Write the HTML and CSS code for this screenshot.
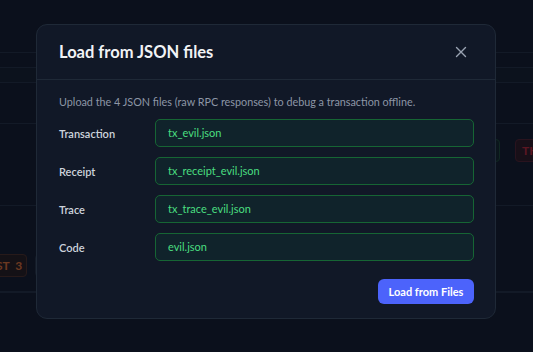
FILE: index.html
```html
<!DOCTYPE html>
<html>
<head>
<meta charset="utf-8">
<title>Load from JSON files</title>
<link rel="stylesheet" href="styles.css">
</head>
<body>

<div class="page">
  <div class="row row-top"></div>
  <div class="row row-thin"></div>
  <div class="row row-thin band"></div>
  <div class="row row-mid"></div>
  <div class="row row-tall">
    <span class="chip chip-green"></span>
    <span class="chip chip-red">TH</span>
  </div>
  <div class="row row-tall row-bottom">
    <span class="chip chip-orange">ST&nbsp;&nbsp;3</span>
    <span class="chip chip-ghost"></span>
  </div>
  <div class="row"></div>
</div>

<div class="overlay">
  <div class="modal">
    <div class="modal-head">
      <h2>Load from JSON files</h2>
      <button class="close" aria-label="Close">
        <svg width="12" height="12" viewBox="0 0 12 12"><path d="M1.5 1.5l9 9M10.5 1.5l-9 9" stroke="#9aa3b2" stroke-width="1.4" stroke-linecap="round"/></svg>
      </button>
    </div>
    <div class="modal-body">
      <p class="intro">Upload the 4 JSON files (raw RPC responses) to debug a transaction offline.</p>
      <div class="fields">
        <label class="label">Transaction</label>
        <div class="file">tx_evil.json</div>
        <label class="label">Receipt</label>
        <div class="file">tx_receipt_evil.json</div>
        <label class="label">Trace</label>
        <div class="file">tx_trace_evil.json</div>
        <label class="label">Code</label>
        <div class="file">evil.json</div>
      </div>
      <div class="actions">
        <button class="primary">Load from Files</button>
      </div>
    </div>
  </div>
</div>

</body>
</html>
```

FILE: styles.css
```css
html, body {
   margin: 0;
   height: 100%;
}

body {
   background-color: #0f1522;
   font-family: Lato, "Liberation Sans", sans-serif;
   overflow: hidden;
}

/* page behind the dialog */

.page {
   display: flex;
   flex-direction: column;
   height: 100%;
}

.row {
   border-bottom: 1px solid #1b2433;
   display: flex;
   align-items: flex-start;
   box-sizing: border-box;
   flex-shrink: 0;
}

.row-top { height: 53px; }
.row-thin { height: 15px; }
.band { background-color: #101724; }
.row-mid { height: 41px; }
.row-tall { height: 82px; padding-top: 15px; }
.row-bottom { height: 86px; padding-top: 48px; }

.chip {
   flex-shrink: 0;
   height: 23px;
   box-sizing: border-box;
   border-radius: 4px;
   font-size: 12px;
   font-weight: 700;
   line-height: 21px;
   white-space: nowrap;
   overflow: hidden;
}

.chip-green {
   margin-left: 455px;
   width: 45px;
   border: 1px solid #16392c;
   background-color: #0f1d22;
}

.chip-red {
   margin-left: 15px;
   width: 40px;
   padding-left: 6px;
   border: 1px solid #3d1a25;
   background-color: #22131d;
   color: #8a1e2c;
}

.chip-orange {
   margin-left: -14px;
   width: 41px;
   padding-left: 9px;
   border: 1px solid #3a2420;
   background-color: #1c1619;
   color: #a4532a;
}

.chip-ghost {
   margin-left: 8px;
   width: 30px;
   border: 1px solid #1d2535;
}

/* dialog */

.overlay {
   position: fixed;
   inset: 0;
   background-color: rgba(6, 9, 16, 0.35);
}

.modal {
   position: absolute;
   left: 36px;
   top: 24px;
   width: 460px;
   box-sizing: border-box;
   background-color: #111827;
   border: 1px solid #1f2937;
   border-radius: 11px;
}

.modal-head {
   height: 54px;
   padding: 0 22px;
   display: flex;
   align-items: center;
   justify-content: space-between;
   border-bottom: 1px solid #1f2937;
}

.modal-head h2 {
   margin: 0;
   font-size: 16.5px;
   font-weight: 700;
   color: #f1f3f6;
}

.close {
   background: none;
   border: none;
   padding: 0;
   margin-right: 6px;
   width: 12px;
   height: 12px;
   display: flex;
}

.modal-body {
   padding: 14px 21px 14px 22px;
}

.intro {
   margin: 0 0 10px;
   font-size: 10.8px;
   line-height: 15px;
   color: #8d96a6;
}

.fields {
   display: grid;
   grid-template-columns: 96px 1fr;
   row-gap: 10px;
   align-items: center;
}

.label {
   font-size: 11px;
   font-weight: 600;
   color: #cdd3dc;
}

.file {
   height: 28px;
   box-sizing: border-box;
   padding-left: 12px;
   border: 1px solid #166534;
   border-radius: 5px;
   background-color: #10232b;
   color: #4ade80;
   font-size: 11px;
   line-height: 26px;
}

.actions {
   display: flex;
   justify-content: flex-end;
   margin-top: 18px;
}

.primary {
   height: 25px;
   width: 96px;
   border: none;
   border-radius: 6px;
   background-color: #4c63fb;
   color: #ffffff;
   font-family: inherit;
   font-size: 11px;
   font-weight: 700;
}
```
